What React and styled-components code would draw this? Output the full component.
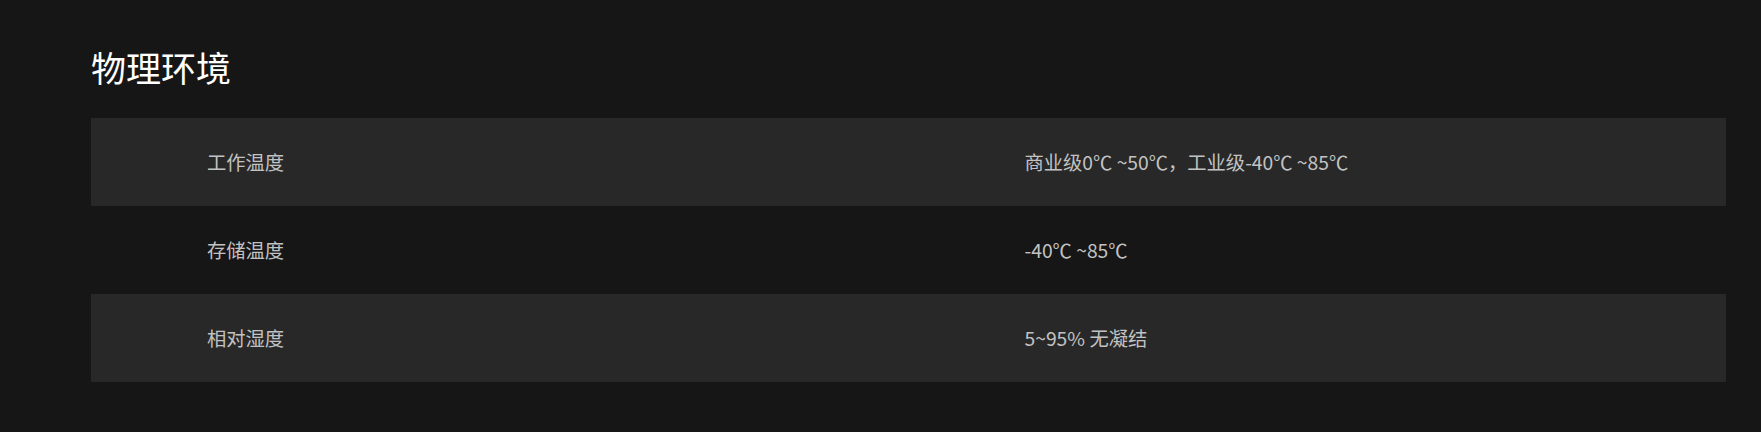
import React from "react";
import styled, { createGlobalStyle } from "styled-components";

const Global = createGlobalStyle`
  html, body {
    margin: 0;
    padding: 0;
    background: #161616;
  }
  body {
    font-family: "Noto Sans CJK SC", "Noto Sans", sans-serif;
  }
`;

const Section = styled.section`
  background: #161616;
  padding: 40px 35px 50px 91px;
`;

const Title = styled.h2`
  margin: 0 0 24px;
  font-size: 35px;
  line-height: 54px;
  font-weight: 400;
  color: #ffffff;
`;

const Table = styled.div`
  display: flex;
  flex-direction: column;
`;

const Row = styled.div`
  display: grid;
  grid-template-columns: 1fr 1fr;
  height: 88px;
  align-items: center;
  background: ${(p) => (p.$shaded ? "#282828" : "transparent")};
`;

const Cell = styled.div`
  padding: 0 0 0 116px;
  font-size: 19.3px;
  color: #c2c2c2;
`;

const rows = [
  ["工作温度", "商业级0℃ ~50℃，工业级-40℃ ~85℃"],
  ["存储温度", "-40℃ ~85℃"],
  ["相对湿度", "5~95% 无凝结"],
];

export default function App() {
  return (
    <>
      <Global />
      <Section>
        <Title>物理环境</Title>
        <Table>
          {rows.map(([k, v], i) => (
            <Row key={k} $shaded={i % 2 === 0}>
              <Cell>{k}</Cell>
              <Cell>{v}</Cell>
            </Row>
          ))}
        </Table>
      </Section>
    </>
  );
}
